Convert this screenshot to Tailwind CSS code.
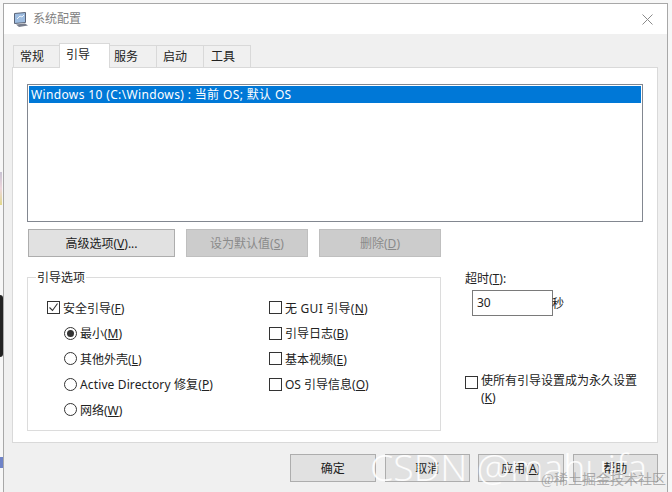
<!DOCTYPE html>
<html lang="zh-CN">
<head>
  <meta charset="UTF-8" />
  <title>系统配置</title>
  <script src="https://cdn.jsdelivr.net/npm/@tailwindcss/browser@4"></script>
</head>
<body class="relative w-[672px] h-[492px] overflow-hidden bg-[#f7f7f7] font-['Noto_Sans','Noto_Sans_CJK_SC',sans-serif] text-[12px] leading-[16px] text-[#222]">
  <!-- 窗口后面露出来的桌面 -->
  <div class="absolute left-0 top-[172px] w-[2px] h-[33px] bg-gradient-to-b from-[#c9c3d3] via-[#eed6dc] to-[#e2d98a]"></div>
  <div class="absolute left-0 top-[295px] w-[3px] h-[62px] rounded-r bg-[#222]"></div>
  <div class="absolute left-0 top-[457px] w-[3px] h-[11px] bg-[#6f83c8]"></div>

  <div class="ml-[3px] mt-[3px] w-[665px] h-[489px] border-l border-t border-r border-[#a8a8a8] flex flex-col">
    <!-- 标题栏 -->
    <div class="h-[30px] shrink-0 bg-white flex items-center pl-[9px] pr-[14px]">
      <svg width="16" height="17" viewBox="0 0 16 17" class="mr-[4px]">
        <path d="M1.5 2.5l11-1v10l-11 1z" fill="#9dbce0" stroke="#5a6478" />
        <path d="M4 8l3-3 2 1 2-2" fill="none" stroke="#eef4fb" />
        <path d="M3 13.5l9-1 3 2-9 1.500z" fill="#777d8c" />
      </svg>
      <span class="text-[#808080]">系统配置</span>
      <svg width="11" height="11" viewBox="0 0 11 11" class="ml-auto"><path d="M.5.5l10 10M10.5.5l-10 10" stroke="#8a8a8a" fill="none" /></svg>
    </div>

    <div class="flex-1 bg-[#f0f0f0] pl-[8px] pr-[9px] flex flex-col">
      <!-- 选项卡 -->
      <div class="h-[33px] shrink-0 flex items-end pl-[1px] relative z-10">
        <div class="w-[47px] h-[22px] flex items-center pl-[6px] border border-[#d9d9d9] border-b-0 -mr-px">常规</div>
        <div class="w-[51px] h-[25px] -mb-px flex items-start pt-[3px] pl-[6px] bg-white border border-[#d9d9d9] border-b-0 relative">引导</div>
        <div class="w-[48px] h-[22px] flex items-center pl-[4px] border border-[#d9d9d9] border-b-0 -ml-px">服务</div>
        <div class="w-[48px] h-[22px] flex items-center pl-[6px] border border-[#d9d9d9] border-b-0 -ml-px">启动</div>
        <div class="w-[48px] h-[22px] flex items-center pl-[7px] border border-[#d9d9d9] border-b-0 -ml-px">工具</div>
      </div>

      <!-- 面板 -->
      <div class="h-[376px] shrink-0 bg-white border border-[#d9d9d9] pl-[14px] pt-[16px]">
        <div class="w-[616px] h-[138px] border border-[#828790] p-[1px]">
          <div class="h-[17px] pl-[2px] bg-[#0078d7] text-white flex items-center whitespace-pre tracking-[0.36px]">Windows 10 (C:\Windows) : 当前 OS; 默认 OS</div>
        </div>

        <div class="flex gap-[11px] mt-[7px] ml-[1px] h-[28px]">
          <div class="w-[147px] pt-[2px] flex items-center justify-center bg-[#e1e1e1] border border-[#adadad]"><span>高级选项(<u>V</u>)...</span></div>
          <div class="w-[122px] pt-[2px] flex items-center justify-center bg-[#cccccc] border border-[#bfbfbf] text-[#8a8a8a]"><span>设为默认值(<u>S</u>)</span></div>
          <div class="w-[122px] pt-[2px] flex items-center justify-center bg-[#cccccc] border border-[#bfbfbf] text-[#8a8a8a]"><span>删除(<u>D</u>)</span></div>
        </div>

        <div class="flex mt-[20px]">
          <!-- 引导选项 -->
          <div class="relative w-[414px] h-[154px] border border-[#dcdcdc] pl-[19px] pt-[17px] grid grid-cols-[222px_1fr] auto-rows-[25.5px]">
            <span class="absolute left-[8px] -top-[8px] bg-white px-[1px]">引导选项</span>

            <div class="flex items-center gap-[3px]">
              <span class="w-[13px] h-[13px] border border-[#333] flex items-center justify-center">
                <svg width="11" height="11" viewBox="0 0 11 11"><path d="M1.5 5.5l3 3 5-7" fill="none" stroke="#333" stroke-width="1.1" /></svg>
              </span>
              <span class="pt-[2px]">安全引导(<u>F</u>)</span>
            </div>
            <div class="flex items-center gap-[3px]">
              <span class="w-[13px] h-[13px] border border-[#333]"></span>
              <span class="pt-[2px] tracking-[0.25px]">无 GUI 引导(<u>N</u>)</span>
            </div>

            <div class="flex items-center gap-[3px] pl-[17px]">
              <span class="w-[13px] h-[13px] rounded-full border border-[#333] flex items-center justify-center"><span class="w-[7px] h-[7px] rounded-full bg-[#333]"></span></span>
              <span class="pt-[2px]">最小(<u>M</u>)</span>
            </div>
            <div class="flex items-center gap-[3px]">
              <span class="w-[13px] h-[13px] border border-[#333]"></span>
              <span class="pt-[2px]">引导日志(<u>B</u>)</span>
            </div>

            <div class="flex items-center gap-[3px] pl-[17px]">
              <span class="w-[13px] h-[13px] rounded-full border border-[#333]"></span>
              <span class="pt-[2px]">其他外壳(<u>L</u>)</span>
            </div>
            <div class="flex items-center gap-[3px]">
              <span class="w-[13px] h-[13px] border border-[#333]"></span>
              <span class="pt-[2px]">基本视频(<u>E</u>)</span>
            </div>

            <div class="flex items-center gap-[3px] pl-[17px]">
              <span class="w-[13px] h-[13px] rounded-full border border-[#333]"></span>
              <span class="pt-[2px] tracking-[0.13px]">Active Directory 修复(<u>P</u>)</span>
            </div>
            <div class="flex items-center gap-[3px]">
              <span class="w-[13px] h-[13px] border border-[#333]"></span>
              <span class="pt-[2px]">OS 引导信息(<u>O</u>)</span>
            </div>

            <div class="flex items-center gap-[3px] pl-[17px]">
              <span class="w-[13px] h-[13px] rounded-full border border-[#333]"></span>
              <span class="pt-[2px]">网络(<u>W</u>)</span>
            </div>
          </div>

          <!-- 超时 -->
          <div class="ml-[24px] w-[180px] -mt-[6px]">
            <div>超时(<u>T</u>):</div>
            <div class="flex items-center mt-[3px] ml-[7px]">
              <div class="w-[81px] h-[26px] border border-[#7a7a7a] pl-[4px] flex items-center">30</div>
              <span class="-ml-px mt-[1px]">秒</span>
            </div>
            <div class="flex gap-[3px] mt-[56px]">
              <span class="w-[13px] h-[13px] mt-[4px] shrink-0 border border-[#333]"></span>
              <span class="w-[160px] leading-[17px]">使所有引导设置成为永久设置(<u>K</u>)</span>
            </div>
          </div>
        </div>
      </div>

      <!-- 底部按钮 -->
      <div class="flex mt-[11px] ml-[278px] h-[28px]">
        <div class="w-[86px] pt-[2px] flex items-center justify-center bg-[#e1e1e1] border border-[#adadad]">确定</div>
        <div class="w-[86px] pt-[2px] ml-[9px] flex items-center justify-center bg-[#e1e1e1] border border-[#adadad]">取消</div>
        <div class="w-[86px] pt-[2px] ml-[8px] flex items-center justify-center bg-[#e1e1e1] border border-[#adadad]"><span>应用(<u>A</u>)</span></div>
        <div class="w-[86px] pt-[2px] ml-[9px] flex items-center justify-center bg-[#e1e1e1] border border-[#adadad]">帮助</div>
      </div>
    </div>
  </div>

  <!-- 水印 -->
  <div class="absolute left-[370px] top-[444px] text-[37.500px] leading-[46px] whitespace-nowrap text-white/90 font-['Open_Sans',sans-serif] font-light">CSDN @mahuifa</div>
  <div class="absolute left-[541px] top-[471px] text-[14px] leading-[18px] whitespace-nowrap text-[#8f8f8f]/70 font-['Liberation_Serif','Noto_Sans_CJK_SC',serif]">@稀土掘金技术社区</div>
</body>
</html>
